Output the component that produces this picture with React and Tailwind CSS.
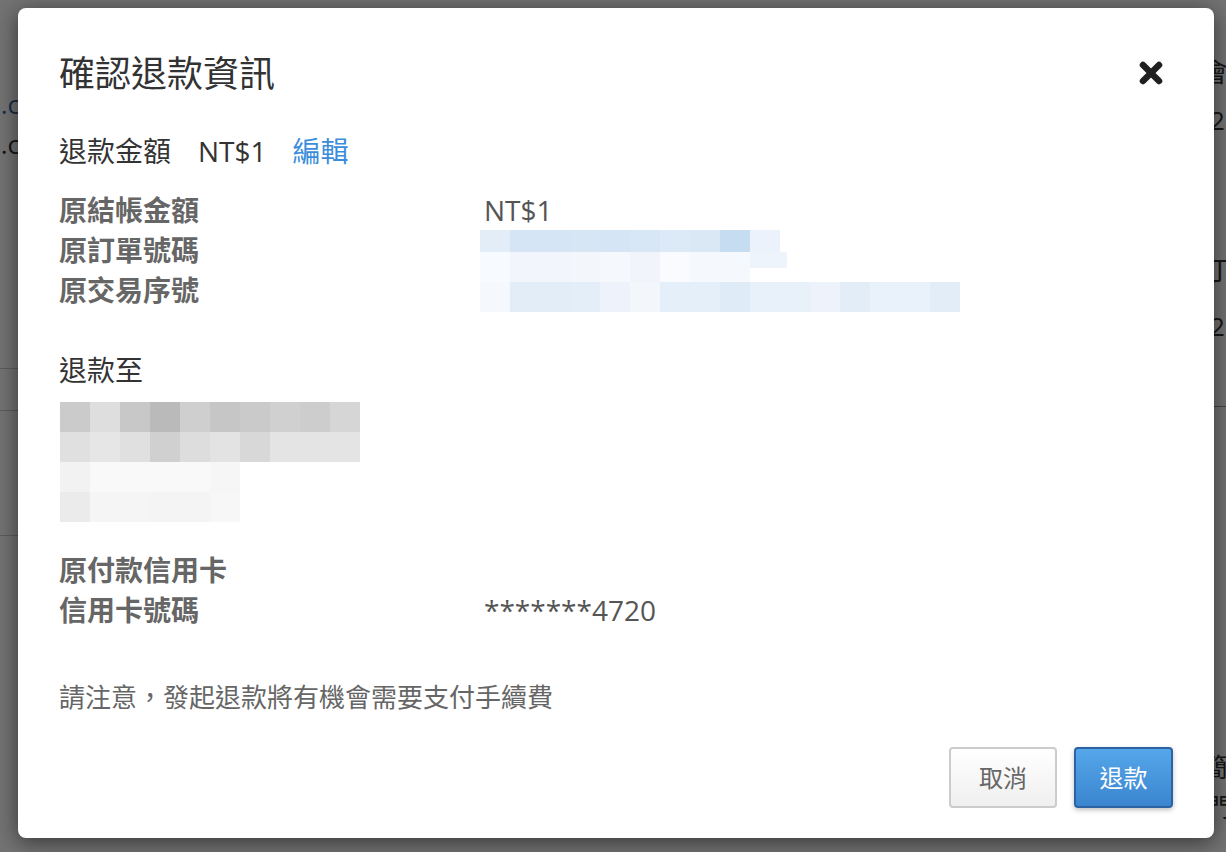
import React from 'react';

// blurred (pixelated) blocks standing in for the hidden order data
const orderTop = ['#e3edf8', '#d5e5f5', '#d5e5f5', '#d6e6f5', '#d5e5f5', '#d8e7f6', '#dce9f7', '#dae8f6', '#c6dcf1', '#ebf2fb'];
const orderMid = ['#f7fafe', '#f2f6fc', '#f2f6fc', '#f3f7fc', '#f5f8fd', '#f1f5fb', '#f9fbfe', '#f5f8fd', '#f5f8fd'];
const orderBottom = ['#f5f8fd', '#e3edf8', '#e3edf8', '#e4eef9', '#eef3fb', '#f3f6fb', '#e5eff9', '#e5eff9', '#e0ebf8', '#e8f0fa', '#e8f0fa', '#eef3fb', '#e3edf8', '#e9f1fa', '#e9f1fa', '#e3edf8'];

const payee = [
  ['#cbcbcb', '#dedede', '#c8c8c8', '#bababa', '#cfcfcf', '#c6c6c6', '#cacaca', '#d0d0d0', '#cdcdcd', '#d6d6d6'],
  ['#e0e0e0', '#e6e6e6', '#e0e0e0', '#d0d0d0', '#dddddd', '#e3e3e3', '#d8d8d8', '#e4e4e4', '#e4e4e4', '#e4e4e4'],
  ['#f2f2f2', '#f9f9f9', '#f9f9f9', '#f9f9f9', '#f9f9f9', '#f6f6f6'],
  ['#ebebeb', '#f5f5f5', '#f5f5f5', '#f4f4f4', '#f4f4f4', '#f7f7f7'],
];

const Cells = ({ colors, h = 'h-[30px]' }) => (
  <div className="flex">
    {colors.map((c, i) => (
      <div key={i} className={`w-[30px] ${h}`} style={{ backgroundColor: c }} />
    ))}
  </div>
);

const CloseIcon = () => (
  <svg width="26" height="26" viewBox="0 0 26 26" fill="none">
    <path d="M5 5 L21 21 M21 5 L5 21" stroke="#1f1f1f" strokeWidth="6.5" strokeLinecap="round" />
  </svg>
);

export default function App() {
  return (
    <div className="relative h-[852px] w-[1226px] overflow-hidden bg-white font-['Open_Sans','Noto_Sans_CJK_TC',sans-serif]">
      {/* page behind the dialog */}
      <div className="flex h-full">
        <div className="ml-[-180px] w-[200px] shrink-0 pt-[84px] text-right text-[26px] leading-[40px]">
          <div className="text-[#3b6aa3]">order@shop.c</div>
          <div className="text-[#333]">shop.c</div>
          <div className="mt-[204px] border-b border-[#ccc]" />
          <div className="mt-[41px] border-b border-[#ccc]" />
          <div className="mt-[124px] border-b border-[#ccc]" />
        </div>
        <div className="flex-1" />
        <div className="w-[24px] shrink-0 whitespace-nowrap text-[26px] leading-[40px] text-[#333]">
          <div className="pt-[52px] pl-[0px]">會計</div>
          <div className="pt-[8px] pl-[8px]">2</div>
          <div className="mt-[110px] pl-[4px]">丁</div>
          <div className="pt-[16px] pl-[8px]">2</div>
          <div className="mt-[60px] border-b border-[#999]" />
          <div className="mt-[340px] pl-[0px]">簡</div>
          <div className="pl-[4px]">門</div>
        </div>
      </div>

      {/* backdrop */}
      <div className="absolute inset-0 bg-black/55" />

      {/* dialog */}
      <div className="absolute left-[18px] top-[8px] w-[1196px] rounded-[8px] bg-white px-[41px] pt-[44px] pb-[30px] shadow-[0_4px_22px_rgba(0,0,0,0.55)]">
        <div className="flex items-center justify-between">
          <h1 className="text-[36px] leading-[44px] text-[#333]">確認退款資訊</h1>
          <button type="button" className="mr-[9px] mt-[-2px]">
            <CloseIcon />
          </button>
        </div>

        <div className="mt-[35px] flex text-[28px] leading-[40px] text-[#333]">
          <span>退款金額</span>
          <span className="ml-[27px]">NT$1</span>
          <a className="ml-[26px] text-[#3b8ddb]">編輯</a>
        </div>

        <div className="mt-[19px] flex text-[28px] leading-[40px]">
          <div className="w-[425px] shrink-0 font-bold text-[#666]">
            <div>原結帳金額</div>
            <div>原訂單號碼</div>
            <div>原交易序號</div>
          </div>
          <div className="text-[#555]">
            <div>NT$1</div>
            <div className="ml-[-4px] h-[80px]">
              <Cells colors={orderTop} h="h-[22px]" />
              <div className="flex items-start">
                <Cells colors={orderMid} />
                <div className="h-[16px] w-[37px] bg-[#eef4fc]" />
              </div>
              <Cells colors={orderBottom} />
            </div>
          </div>
        </div>

        <div className="mt-[40px] text-[28px] leading-[40px] text-[#333]">退款至</div>

        <div className="mt-[12px] ml-[1px]">
          {payee.map((row, i) => (
            <Cells key={i} colors={row} />
          ))}
        </div>

        <div className="mt-[28px] flex text-[28px] leading-[40px]">
          <div className="w-[425px] shrink-0 font-bold text-[#666]">
            <div>原付款信用卡</div>
            <div>信用卡號碼</div>
          </div>
          <div className="text-[#555]">
            <div className="h-[40px]" />
            <div>*******4720</div>
          </div>
        </div>

        <p className="mt-[47px] text-[26px] leading-[40px] text-[#666]">請注意，發起退款將有機會需要支付手續費</p>

        <div className="mt-[30px] flex justify-end gap-[17px]">
          <button
            type="button"
            className="h-[61px] w-[108px] rounded-[4px] border-2 border-[#cccccc] bg-gradient-to-b from-white to-[#efefef] text-[24px] text-[#666]"
          >
            取消
          </button>
          <button
            type="button"
            className="h-[61px] w-[99px] rounded-[4px] border-2 border-[#2c64a3] bg-gradient-to-b from-[#55a6ea] to-[#3b86cf] text-[24px] text-white shadow-[0_2px_5px_rgba(0,0,0,0.25)]"
          >
            退款
          </button>
        </div>
      </div>
    </div>
  );
}
